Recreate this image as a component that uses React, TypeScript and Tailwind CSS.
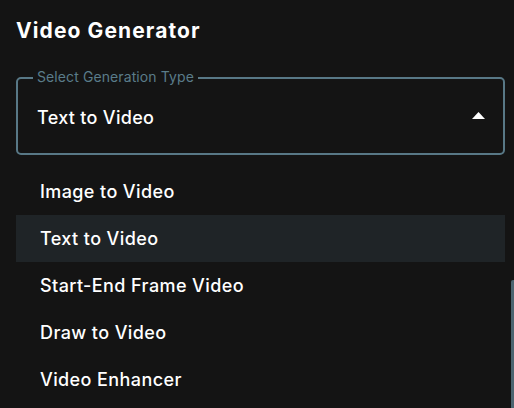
import React from "react";

const items = ["Image to Video", "Text to Video", "Start-End Frame Video", "Draw to Video", "Video Enhancer"];

export default function App() {
  return (
    <div className="relative w-[514px] h-[408px] overflow-hidden bg-[#141414] text-white" style={{ fontFamily: "Inter, 'Noto Sans', sans-serif" }}>
      <div className="px-4 pt-[16px]">
        <h1 className="text-[21px] leading-[30px] font-bold tracking-[1.1px]">Video Generator</h1>
        <div className="relative mt-[31px] w-[489px] h-[78px] border-2 border-[#587886] rounded-[5px] flex items-center justify-between pl-[19px] pr-[18px]">
          <span className="absolute -top-[11px] left-[15px] px-[4px] bg-[#141414] text-[14px] leading-[18px] tracking-[0.1px] text-[#5a7c8a]">Select Generation Type</span>
          <span className="mt-[3px] text-[18px] leading-[24px] font-medium tracking-[0.3px]">Text to Video</span>
          <svg width="13" height="7" viewBox="0 0 13 7" className="mt-[-1px]">
            <path d="M0 7 L6.5 0 L13 7 Z" fill="#ffffff" />
          </svg>
        </div>
        <ul className="mt-[13px] w-[489px]">
          {items.map((it) => (
            <li
              key={it}
              className={`h-[47px] flex items-center pl-[24px] text-[18px] font-medium tracking-[0.4px] ${it === "Text to Video" ? "bg-[#1f2427]" : ""}`}
            >
              {it}
            </li>
          ))}
        </ul>
      </div>
      <div className="absolute right-0 top-[280px] w-[3px] h-[128px] bg-[#4c6470] rounded-tl-[2px]" />
    </div>
  );
}
